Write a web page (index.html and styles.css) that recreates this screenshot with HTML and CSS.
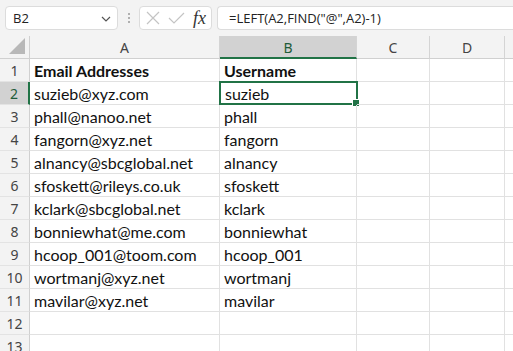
FILE: index.html
```html
<!DOCTYPE html>
<html>
<head>
<meta charset="utf-8">
<link rel="stylesheet" href="styles.css">
</head>
<body>
<div class="topbar">
  <div class="namebox"><span class="ref">B2</span>
    <svg class="chev" width="10" height="6" viewBox="0 0 10 6"><path d="M1 1 L5 5 L9 1" fill="none" stroke="#555" stroke-width="1.2"/></svg>
  </div>
  <div class="dots"><i></i><i></i><i></i></div>
  <div class="fxbox">
    <svg width="14" height="14" viewBox="0 0 14 14"><path d="M1 1 L13 13 M13 1 L1 13" stroke="#c4c4c4" stroke-width="1.2" fill="none"/></svg>
    <svg width="17" height="13" viewBox="0 0 17 13"><path d="M1 6 L6 11 L16 1" stroke="#c4c4c4" stroke-width="1.2" fill="none"/></svg>
    <span class="fx">fx</span>
  </div>
  <div class="formula">=LEFT(A2,FIND("@",A2)-1)</div>
</div>
<div class="sheet">
  <div class="corner"><svg width="16" height="16" viewBox="0 0 16 16"><path d="M16 0 L16 16 L0 16 Z" fill="#b8b8b8"/></svg></div>
  <div class="ch">A</div><div class="ch sel">B</div><div class="ch">C</div><div class="ch">D</div><div class="ch last"></div>

  <div class="rh">1</div><div class="c b">Email Addresses</div><div class="c b">Username</div><div class="c"></div><div class="c"></div><div class="c last"></div>
  <div class="rh sel">2</div><div class="c">suzieb@xyz.com</div><div class="c active">suzieb<span class="handle"></span></div><div class="c"></div><div class="c"></div><div class="c last"></div>
  <div class="rh">3</div><div class="c">phall@nanoo.net</div><div class="c">phall</div><div class="c"></div><div class="c"></div><div class="c last"></div>
  <div class="rh">4</div><div class="c">fangorn@xyz.net</div><div class="c">fangorn</div><div class="c"></div><div class="c"></div><div class="c last"></div>
  <div class="rh">5</div><div class="c">alnancy@sbcglobal.net</div><div class="c">alnancy</div><div class="c"></div><div class="c"></div><div class="c last"></div>
  <div class="rh">6</div><div class="c">sfoskett@rileys.co.uk</div><div class="c">sfoskett</div><div class="c"></div><div class="c"></div><div class="c last"></div>
  <div class="rh">7</div><div class="c">kclark@sbcglobal.net</div><div class="c">kclark</div><div class="c"></div><div class="c"></div><div class="c last"></div>
  <div class="rh">8</div><div class="c">bonniewhat@me.com</div><div class="c">bonniewhat</div><div class="c"></div><div class="c"></div><div class="c last"></div>
  <div class="rh">9</div><div class="c">hcoop_001@toom.com</div><div class="c">hcoop_001</div><div class="c"></div><div class="c"></div><div class="c last"></div>
  <div class="rh">10</div><div class="c">wortmanj@xyz.net</div><div class="c">wortmanj</div><div class="c"></div><div class="c"></div><div class="c last"></div>
  <div class="rh">11</div><div class="c">mavilar@xyz.net</div><div class="c">mavilar</div><div class="c"></div><div class="c"></div><div class="c last"></div>
  <div class="rh">12</div><div class="c"></div><div class="c"></div><div class="c"></div><div class="c"></div><div class="c last"></div>
  <div class="rh">13</div><div class="c"></div><div class="c"></div><div class="c"></div><div class="c"></div><div class="c last"></div>
</div>
</body>
</html>
```
FILE: styles.css
```css
html, body { margin: 0; padding: 0; background: #fff; overflow: hidden; }
body { width: 513px; height: 351px; font-family: "Open Sans", "Liberation Sans", sans-serif; }

.topbar {
  height: 36px; background: #f3f3f3; display: flex; align-items: center;
  padding-left: 5px; box-sizing: border-box;
}
.namebox {
  width: 113px; height: 24px; box-sizing: border-box; background: #fff;
  border: 1px solid #dcdcdc; border-radius: 4px; display: flex; align-items: center;
  justify-content: space-between; padding: 0 6px 0 7px; font-size: 13px; color: #222;
}
.chev { margin-top: 1px; }
.dots { width: 21px; display: flex; flex-direction: column; align-items: center; gap: 2px; }
.dots i { width: 2px; height: 2px; background: #9a9a9a; border-radius: 1px; }
.fxbox {
  width: 73px; height: 24px; box-sizing: border-box; background: #fff;
  border: 1px solid #dcdcdc; border-radius: 4px; display: flex; align-items: center;
  padding: 0 4px 0 6px; gap: 8px;
}
.fx { font-family: "Liberation Serif", serif; font-style: italic; font-size: 18px; color: #333; margin-left: 0; line-height: 1; }
.formula {
  margin-left: 5px; flex: 1; height: 24px; box-sizing: border-box; background: #fff;
  border: 1px solid #dcdcdc; border-right: none; border-radius: 4px 0 0 4px;
  display: flex; align-items: center; padding-left: 11px; font-size: 13px; color: #222;
}

.sheet {
  display: grid;
  grid-template-columns: 30px 190px 137px 73px 75px 8px;
  grid-auto-rows: 23px;
}
.corner { background: #f3f3f3; border-right: 1px solid #d0d0d0; border-bottom: 1px solid #d0d0d0; box-sizing: border-box; display: flex; align-items: flex-end; justify-content: flex-end; padding: 0 4px 4px 0; }
.ch {
  background: #f3f3f3; border-right: 1px solid #d4d4d4; border-bottom: 1px solid #d0d0d0;
  box-sizing: border-box; display: flex; align-items: center; justify-content: center;
  font-size: 14px; color: #444; font-family: "Noto Sans", sans-serif; padding-top: 1px;
}
.ch.sel { background: #d2d2d2; color: #1f5c3a; border-bottom: 2px solid #217346; }
.ch.last { border-right: none; }
.rh {
  background: #f3f3f3; border-right: 1px solid #d0d0d0; border-bottom: 1px solid #e3e3e3;
  box-sizing: border-box; display: flex; align-items: center; justify-content: center;
  font-size: 14px; color: #444; font-family: "Noto Sans", sans-serif;
}
.rh.sel { background: #d2d2d2; color: #1f5c3a; border-right: 2px solid #217346; }
.c {
  border-right: 1px solid #e1e1e1; border-bottom: 1px solid #e1e1e1; box-sizing: border-box;
  display: flex; align-items: center; padding: 1px 0 0 4px; font-size: 16px; color: #111;
  font-family: "Lato", "Open Sans", sans-serif; white-space: nowrap; position: relative;
}
.c.b { font-weight: bold; }
.c.last { border-right: none; }
.c.active { border: 2px solid #217346; margin: -1px 0 0 -1px; padding-left: 4px; width: 139px; height: 24px; }
.handle { position: absolute; right: -4px; bottom: -4px; width: 6px; height: 6px; background: #217346; border: 1px solid #fff; }
```
